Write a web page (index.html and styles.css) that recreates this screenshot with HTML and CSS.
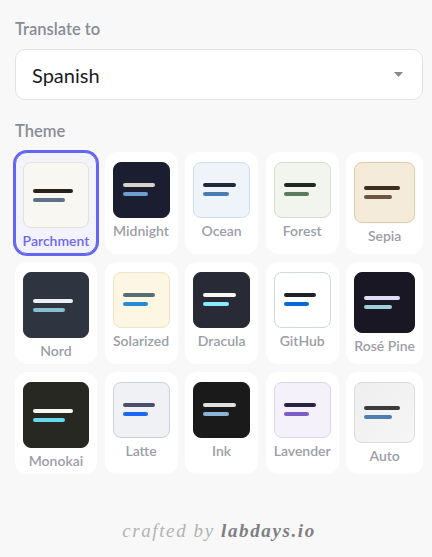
FILE: index.html
```html
<!DOCTYPE html>
<html lang="en">
<head>
<meta charset="utf-8">
<link rel="stylesheet" href="styles.css">
</head>
<body>
<main class="panel">
  <div class="field-label">Translate to</div>
  <div class="select">
    <span class="select-value">Spanish</span>
    <svg class="select-arrow" width="9" height="5" viewBox="0 0 9 5"><path d="M0 0H9L4.5 5Z" fill="#8a8a8a"/></svg>
  </div>

  <div class="field-label theme-label">Theme</div>
  <div class="themes">
    <div class="card selected"><div class="pv t-parchment"><i class="l1"></i><i class="l2"></i></div><span class="name">Parchment</span></div>
    <div class="card"><div class="pv t-midnight"><i class="l1"></i><i class="l2"></i></div><span class="name">Midnight</span></div>
    <div class="card"><div class="pv t-ocean"><i class="l1"></i><i class="l2"></i></div><span class="name">Ocean</span></div>
    <div class="card"><div class="pv t-forest"><i class="l1"></i><i class="l2"></i></div><span class="name">Forest</span></div>
    <div class="card"><div class="pv t-sepia"><i class="l1"></i><i class="l2"></i></div><span class="name">Sepia</span></div>

    <div class="card"><div class="pv t-nord"><i class="l1"></i><i class="l2"></i></div><span class="name">Nord</span></div>
    <div class="card"><div class="pv t-solarized"><i class="l1"></i><i class="l2"></i></div><span class="name">Solarized</span></div>
    <div class="card"><div class="pv t-dracula"><i class="l1"></i><i class="l2"></i></div><span class="name">Dracula</span></div>
    <div class="card"><div class="pv t-github"><i class="l1"></i><i class="l2"></i></div><span class="name">GitHub</span></div>
    <div class="card"><div class="pv t-rose"><i class="l1"></i><i class="l2"></i></div><span class="name">Rosé Pine</span></div>

    <div class="card"><div class="pv t-monokai"><i class="l1"></i><i class="l2"></i></div><span class="name">Monokai</span></div>
    <div class="card"><div class="pv t-latte"><i class="l1"></i><i class="l2"></i></div><span class="name">Latte</span></div>
    <div class="card"><div class="pv t-ink"><i class="l1"></i><i class="l2"></i></div><span class="name">Ink</span></div>
    <div class="card"><div class="pv t-lavender"><i class="l1"></i><i class="l2"></i></div><span class="name">Lavender</span></div>
    <div class="card"><div class="pv t-auto"><i class="l1"></i><i class="l2"></i></div><span class="name">Auto</span></div>
  </div>

  <footer class="credit"><span class="by">crafted by</span> <span class="brand">labdays.io</span></footer>
</main>
</body>
</html>
```

FILE: styles.css
```css
* { box-sizing: border-box; }
html, body { margin: 0; padding: 0; }
body {
  background: #f8f8f8;
  font-family: Lato, "Noto Sans", sans-serif;
  width: 432px;
  height: 557px;
  overflow: hidden;
}
.panel {
  padding: 19px 9px 0 15px;
}
.field-label {
  font-size: 16.5px;
  line-height: 20px;
  font-weight: 600;
  color: #888c94;
}
.select {
  margin-top: 10px;
  height: 51px;
  background: #fff;
  border: 1px solid #e2e2e4;
  border-radius: 10px;
  display: flex;
  align-items: center;
  justify-content: space-between;
  padding: 0 19px 0 16px;
}
.select-value {
  font-size: 20px;
  color: #1b1b1f;
  font-family: Lato, sans-serif;
}
.select-arrow { display: block; }
.theme-label { margin-top: 21px; }

.themes {
  margin-top: 11px;
  display: grid;
  grid-template-columns: 82px repeat(4, 1fr);
  grid-auto-rows: 102px;
  column-gap: 7.5px;
  row-gap: 8px;
}
.card {
  background: #fff;
  border-radius: 12px;
  padding: 10px 8px 8px;
  display: flex;
  flex-direction: column;
  align-items: center;
}
.card.selected {
  background: #f3f3ff;
  border: 1px solid #6466f1;
  box-shadow: 0 0 0 2px #6466f1;
  padding: 9px 7px 7px;
}
.pv {
  width: 100%;
  aspect-ratio: 1 / 0.98;
  border-radius: 8px;
  border: 1px solid transparent;
  display: flex;
  flex-direction: column;
  justify-content: center;
  gap: 5px;
  padding: 0 9px;
}
.card:nth-child(5n+1) .pv, .card:nth-child(5n) .pv { aspect-ratio: 1; }
.pv i {
  display: block;
  height: 4px;
  border-radius: 2px;
}
.pv .l1 { width: 88%; }
.pv .l2 { width: 69%; }
.name {
  margin-top: 4px;
  font-size: 14px;
  line-height: 17px;
  font-weight: 600;
  color: #9b9ea5;
  white-space: nowrap;
}
.selected .name { color: #6d67f1; }

.t-parchment { background: #f9f7f2; border-color: #e9e2d4; }
.t-parchment .l1 { background: #2b2118; } .t-parchment .l2 { background: #5f7089; }
.t-midnight { background: #1b1d31; border-color: #1b1d31; }
.t-midnight .l1 { background: #d9d2ca; } .t-midnight .l2 { background: #6c9ecf; }
.t-ocean { background: #eff4fa; border-color: #cfdeec; }
.t-ocean .l1 { background: #1d2a3b; } .t-ocean .l2 { background: #4a7eb0; }
.t-forest { background: #f2f4ee; border-color: #d9dcd0; }
.t-forest .l1 { background: #1f2a1f; } .t-forest .l2 { background: #5b7b5b; }
.t-sepia { background: #f5ebda; border-color: #dfcba7; }
.t-sepia .l1 { background: #3e2c1c; } .t-sepia .l2 { background: #6c5443; }
.t-nord { background: #2e3440; border-color: #2e3440; }
.t-nord .l1 { background: #eceff4; } .t-nord .l2 { background: #88c0d0; }
.t-solarized { background: #fdf6e3; border-color: #efe4c6; }
.t-solarized .l1 { background: #586e75; } .t-solarized .l2 { background: #268bd2; }
.t-dracula { background: #282a36; border-color: #282a36; }
.t-dracula .l1 { background: #f8f8f2; } .t-dracula .l2 { background: #8be9fd; }
.t-github { background: #ffffff; border-color: #d0d7de; }
.t-github .l1 { background: #1f2328; } .t-github .l2 { background: #0969da; }
.t-rose { background: #191724; border-color: #191724; }
.t-rose .l1 { background: #e0def4; } .t-rose .l2 { background: #9ccfd8; }
.t-monokai { background: #272822; border-color: #272822; }
.t-monokai .l1 { background: #f8f8f2; } .t-monokai .l2 { background: #66d9ef; }
.t-latte { background: #eff1f5; border-color: #ccd0da; }
.t-latte .l1 { background: #4c4f69; } .t-latte .l2 { background: #1e66f5; }
.t-ink { background: #1a1a1a; border-color: #1a1a1a; }
.t-ink .l1 { background: #e0e0e0; } .t-ink .l2 { background: #8ab4d8; }
.t-lavender { background: #f4f1fa; border-color: #ddd6ee; }
.t-lavender .l1 { background: #2a2540; } .t-lavender .l2 { background: #7d5cc5; }
.t-auto { background: linear-gradient(135deg, #eeeeee, #f6f6f6); border-color: #dcdcdc; }
.t-auto .l1 { background: #3b3b3b; } .t-auto .l2 { background: #4a80b3; }

.credit {
  margin-top: 46px;
  text-align: center;
  font-family: "Liberation Serif", serif;
  font-style: italic;
  font-size: 19px;
  letter-spacing: 1.6px;
}
.credit .by { color: #b3b3b3; }
.credit .brand { color: #7f7f7f; font-weight: 700; }
```
